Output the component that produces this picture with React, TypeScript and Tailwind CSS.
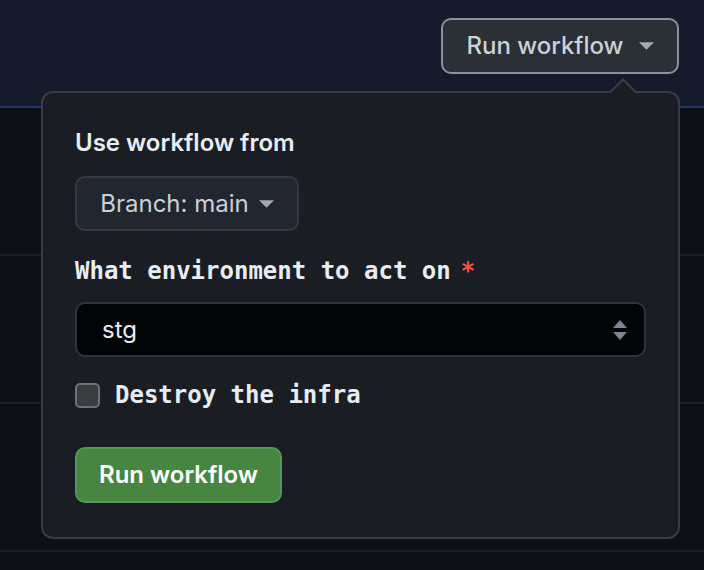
const sans = { fontFamily: "Inter, 'Noto Sans', sans-serif" };
const mono = { fontFamily: "'DejaVu Sans Mono', 'Liberation Mono', monospace" };

function Caret({ className = "" }: { className?: string }) {
  return (
    <svg viewBox="0 0 16 8" className={className} fill="currentColor">
      <path d="M0 0h16L8 8z" />
    </svg>
  );
}

function UpDown() {
  return (
    <svg viewBox="0 0 14 20" className="h-[20px] w-[14px] text-[#7d8590]" fill="currentColor">
      <path d="M7 0l7 8H0z" />
      <path d="M0 12h14l-7 8z" />
    </svg>
  );
}

export default function App() {
  return (
    <div className="relative h-[570px] w-[704px] overflow-hidden bg-[#0d1015]" style={sans}>
      <div className="flex h-[108px] justify-end border-b-2 border-[#1f3b70] bg-[#151b2a] pr-[25px] pt-[18px]">
        <button
          type="button"
          className="flex h-[56px] w-[238px] items-center justify-center gap-[15px] rounded-[10px] border-2 border-[#8b929b] bg-[#2b2f36] text-[24px] font-medium text-[#c9d1d9]"
        >
          Run workflow
          <Caret className="h-[8px] w-[15px] text-[#a3a9b1]" />
        </button>
      </div>
      <div className="h-[148px] border-b-2 border-[#1c2027]" />
      <div className="h-[148px] border-b-2 border-[#1c2027]" />
      <div className="h-[148px] border-b-2 border-[#1c2027]" />

      <div className="absolute left-[41px] top-[91px] w-[639px] rounded-[12px] border-2 border-[#383d45] bg-[#1a1d24] px-[32px] pb-[34px] pt-[35px]">
        <div className="absolute -top-[15px] left-[565px] h-0 w-0 border-x-[15px] border-b-[15px] border-x-transparent border-b-[#383d45]" />
        <div className="absolute -top-[12px] left-[567px] h-0 w-0 border-x-[13px] border-b-[13px] border-x-transparent border-b-[#1a1d24]" />

        <p className="text-[24px] font-semibold leading-[30px] text-[#e6edf3]">Use workflow from</p>
        <button
          type="button"
          className="mt-[18px] flex h-[55px] w-[224px] items-center justify-center gap-[10px] rounded-[10px] border-2 border-[#353a42] bg-[#22262e] text-[24px] text-[#c9d1d9]"
        >
          Branch: main
          <Caret className="h-[8px] w-[15px] text-[#a3a9b1]" />
        </button>

        <p className="mt-[25px] text-[24px] font-bold leading-[30px] text-[#e6edf3]" style={mono}>
          What environment to act on<span className="ml-[10px] text-[#f85149]">*</span>
        </p>
        <div className="mt-[16px] flex h-[55px] items-center justify-between rounded-[10px] border-2 border-[#30353d] bg-[#020408] pl-[25px] pr-[17px]">
          <span className="text-[24px] text-[#e6edf3]">stg</span>
          <UpDown />
        </div>

        <label className="mt-[23px] flex items-center gap-[15px]">
          <span className="h-[25px] w-[25px] rounded-[5px] border-2 border-[#6e7178] bg-[#3b3c3f]" />
          <span className="text-[24px] font-bold leading-[30px] text-[#e6edf3]" style={mono}>
            Destroy the infra
          </span>
        </label>

        <button
          type="button"
          className="mt-[37px] flex h-[56px] w-[207px] items-center justify-center rounded-[10px] border-2 border-[#54975a] bg-[#468641] text-[24px] font-semibold text-white"
        >
          Run workflow
        </button>
      </div>
    </div>
  );
}
